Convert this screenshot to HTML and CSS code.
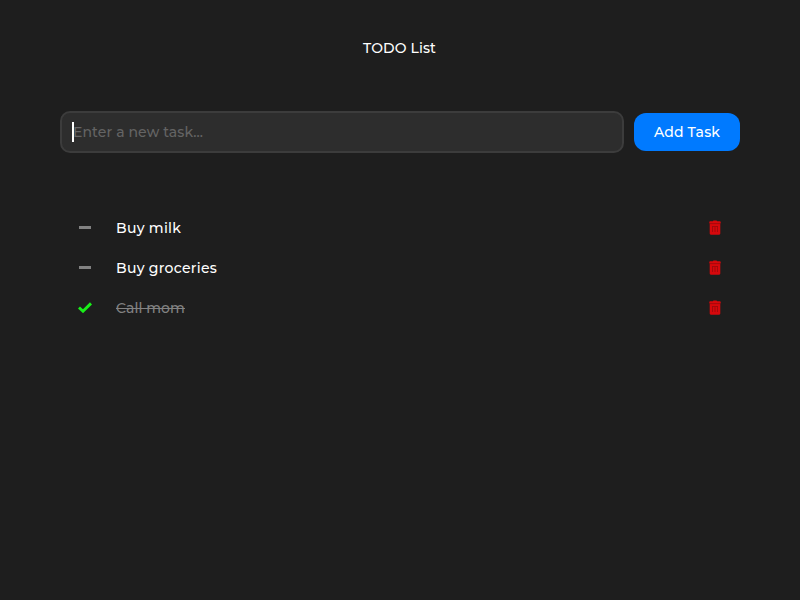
FILE: index.html
```html
<!DOCTYPE html>
<html lang="en">
<head>
<meta charset="utf-8">
<title>TODO List</title>
<link rel="stylesheet" href="styles.css">
</head>
<body>
<svg class="symbols" aria-hidden="true">
  <symbol id="trash" viewBox="0 0 12 15">
    <path fill="#d6080c" d="M.3 3V2Q.3 1.2 1.2 1.2H3.8Q4 .4 4.8 .4H7.2Q8 .4 8.2 1.2H10.8Q11.7 1.2 11.7 2V3L11.3 3.5V13.6Q11.3 14.7 10.2 14.7H1.8Q.7 14.7 .7 13.6V3.5Z"/>
    <path fill="none" stroke="#98090b" stroke-width=".8" d="M1 3.6H11M3.5 6V12M6 7V12M8.5 6V12M3.5 6.5H8.5"/>
  </symbol>
</svg>
<main class="app">
  <h1 class="title">TODO List</h1>
  <div class="entry">
    <div class="field"><span class="caret"></span><span class="placeholder">Enter a new task...</span></div>
    <button class="add"><span>Add Task</span></button>
  </div>
  <ul class="tasks">
    <li class="task"><span class="status"><i class="dash"></i></span><span class="label">Buy milk</span><svg class="trash"><use href="#trash"/></svg></li>
    <li class="task"><span class="status"><i class="dash"></i></span><span class="label">Buy groceries</span><svg class="trash"><use href="#trash"/></svg></li>
    <li class="task"><span class="status"><svg class="check" viewBox="0 0 14 11"><path d="M1 5.5 5 9.2 13 1.4"/></svg></span><span class="label done">Call mom</span><svg class="trash"><use href="#trash"/></svg></li>
  </ul>
</main>
</body>
</html>
```
FILE: styles.css
```css
* { box-sizing: border-box; }
body {
  margin: 0;
  height: 600px;
  overflow: hidden;
  background: #1e1e1e;
  color: #fff;
  font: 500 14px/20px Montserrat, Inter, sans-serif;
}
.symbols { display: none; }
.app { padding: 38px 60px 0; }
.title { margin: 0; font: inherit; text-align: center; letter-spacing: .1px; padding-right: 1px; }
.entry { display: flex; align-items: center; gap: 10px; margin-top: 53px; }
.field {
  flex: 1;
  height: 42px;
  display: flex;
  align-items: center;
  padding: 0 10px;
  border: 2px solid #3c3c3c;
  border-radius: 10px;
  background: #2d2d2d;
}
.caret { width: 2px; height: 20px; background: #fff; }
.placeholder { margin-left: -1px; color: #646464; letter-spacing: .1px; }
.add {
  width: 106px;
  height: 38px;
  padding: 0;
  border: 0;
  border-radius: 12px;
  background: #007aff;
  color: #fff;
  font: inherit;
  letter-spacing: .17px;
}
.tasks { list-style: none; margin: 55px 0 0; padding: 0 19px 0 18px; }
.task { display: flex; align-items: center; height: 40px; }
.status { width: 38px; display: flex; align-items: center; }
.dash { width: 12px; height: 3px; margin: 0 0 1px 1px; background: #828282; }
.check { width: 14px; height: 11px; margin-bottom: 1px; fill: none; stroke: #19ee19; stroke-width: 2.9; }
.label { margin-right: auto; letter-spacing: .29px; }
.done { color: #828282; letter-spacing: .08px; text-decoration: line-through; }
.trash { width: 12px; height: 15px; margin-bottom: 1px; }
```
